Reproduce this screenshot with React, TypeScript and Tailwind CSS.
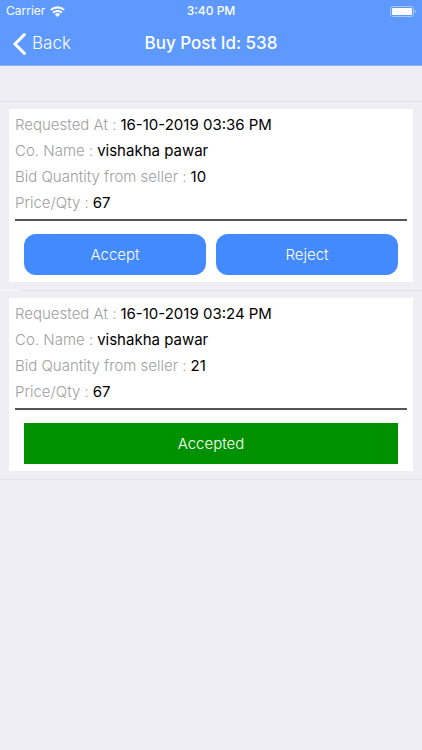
type Bid = {
  id: number;
  requestedAt: string;
  companyName: string;
  quantity: number;
  price: number;
  status: "pending" | "accepted";
};

const bids: Bid[] = [
  {
    id: 1,
    requestedAt: "16-10-2019 03:36 PM",
    companyName: "vishakha pawar",
    quantity: 10,
    price: 67,
    status: "pending"
  },
  {
    id: 2,
    requestedAt: "16-10-2019 03:24 PM",
    companyName: "vishakha pawar",
    quantity: 21,
    price: 67,
    status: "accepted"
  }
];

function StatusBar() {
  return (
    <div className="grid h-[22px] grid-cols-3 items-center px-[6px] text-[12px] leading-[22px]">
      <div className="flex items-center gap-[5px]">
        <span>Carrier</span>
        <svg aria-hidden="true" className="h-[11px] w-[15px]" viewBox="0 0 15 11">
          <g fill="none" stroke="currentColor" strokeWidth="2.1">
            <path d="M.9 4.1a9.4 9.4 0 0 1 13.2 0" />
            <path d="M3.2 6.7a6.1 6.1 0 0 1 8.6 0" />
          </g>
          <path d="M7.5 11 4.9 8.4a3.7 3.7 0 0 1 5.2 0z" fill="currentColor" />
        </svg>
      </div>
      <span className="text-center font-medium">3:40 PM</span>
      <svg
        aria-hidden="true"
        className="h-[11px] w-[26px] justify-self-end"
        viewBox="0 0 26 11"
      >
        <rect
          fill="none"
          height="10"
          rx="2.5"
          stroke="white"
          strokeOpacity="0.45"
          width="23"
          x="0.5"
          y="0.5"
        />
        <rect fill="white" height="7" rx="1" width="20" x="2" y="2" />
        <path d="M24.8 3.8c1.6.6 1.6 2.8 0 3.4z" fill="white" fillOpacity="0.5" />
      </svg>
    </div>
  );
}

function NavBar() {
  return (
    <div className="grid h-11 grid-cols-[1fr_auto_1fr] items-center border-b border-[#8caee6] px-3">
      <button className="flex items-center gap-[6px] text-[17px] font-light" type="button">
        <svg aria-hidden="true" className="h-[22px] w-[14px]" viewBox="0 0 14 22">
          <path
            d="M12.4 1.6 3 11l9.4 9.4"
            fill="none"
            stroke="currentColor"
            strokeLinecap="round"
            strokeWidth="3"
          />
        </svg>
        Back
      </button>
      <h1 className="text-[17px] font-medium">Buy Post Id: 538</h1>
    </div>
  );
}

function Field({ label, value }: { label: string; value: string | number }) {
  return (
    <div className="flex gap-1">
      <dt className="font-light text-[#a0a0a0]">{label} :</dt>
      <dd className="text-black">{value}</dd>
    </div>
  );
}

function BidCard({ bid }: { bid: Bid }) {
  return (
    <article className="bg-white px-[6px] pt-[3px] pb-[7px] text-[15px]">
      <dl className="leading-[26px]">
        <Field label="Requested At" value={bid.requestedAt} />
        <Field label="Co. Name" value={bid.companyName} />
        <Field label="Bid Quantity from seller" value={bid.quantity} />
        <Field label="Price/Qty" value={bid.price} />
      </dl>
      <hr className="mt-[3px] border-t-2 border-[#555555]" />
      <div className="mt-[13px] flex gap-[10px] px-[9px] font-light text-white">
        {bid.status === "pending" ? (
          <>
            <button className="h-[41px] flex-1 rounded-xl bg-[#448aff] pt-px" type="button">
              Accept
            </button>
            <button className="h-[41px] flex-1 rounded-xl bg-[#448aff] pt-px" type="button">
              Reject
            </button>
          </>
        ) : (
          <button className="h-[41px] flex-1 bg-[#009100] pt-px" type="button">
            Accepted
          </button>
        )}
      </div>
    </article>
  );
}

export default function App() {
  return (
    <div className="min-h-screen bg-[#efeef5] font-['Inter',sans-serif]">
      <header className="bg-[#5e99ff] text-white">
        <StatusBar />
        <NavBar />
      </header>
      <main className="pt-[35px]">
        <ul className="border-t border-[#e2e1e7]">
          {bids.map((bid) => (
            <li key={bid.id} className="group">
              <div className="px-[9px] pt-[7px] pb-2">
                <BidCard bid={bid} />
              </div>
              {/* separators between rows are inset, the last one is full width */}
              <div className="bg-[#f8f8fb]">
                <div className="ml-5 h-px bg-[#e2e1e7] group-last:ml-0" />
              </div>
            </li>
          ))}
        </ul>
      </main>
    </div>
  );
}
